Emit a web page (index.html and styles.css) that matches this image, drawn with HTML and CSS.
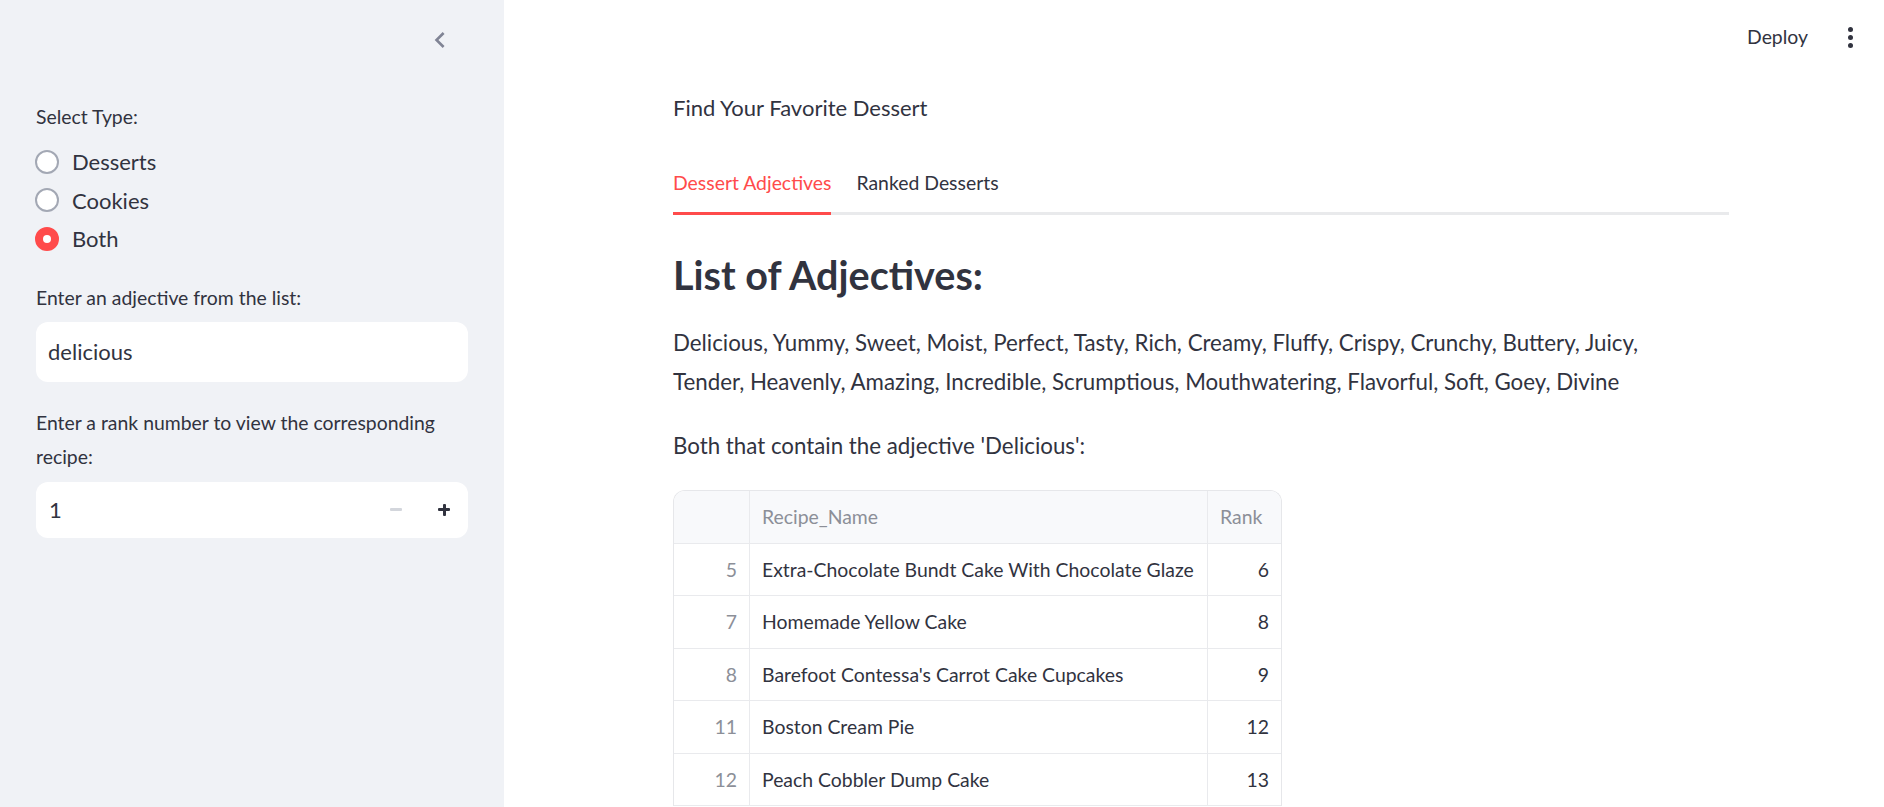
FILE: index.html
```html
<!DOCTYPE html>
<html lang="en">
<head>
<meta charset="utf-8">
<title>Find Your Favorite Dessert</title>
<link rel="stylesheet" href="styles.css">
</head>
<body>
<div class="app">
  <aside class="sidebar">
    <div class="sidebar-top">
      <button class="collapse" aria-label="Collapse sidebar">
        <svg width="32" height="32" viewBox="0 0 24 24"><path d="M15.41 7.41L14 6l-6 6 6 6 1.41-1.41L10.83 12z" fill="#808495"/></svg>
      </button>
    </div>
    <div class="widget">
      <div class="label">Select Type:</div>
      <div class="radios">
        <div class="radio"><span class="dot"></span><span>Desserts</span></div>
        <div class="radio"><span class="dot"></span><span>Cookies</span></div>
        <div class="radio"><span class="dot on"></span><span>Both</span></div>
      </div>
    </div>
    <div class="widget w2">
      <div class="label">Enter an adjective from the list:</div>
      <div class="textbox">delicious</div>
    </div>
    <div class="widget w3">
      <div class="label">Enter a rank number to view the corresponding recipe:</div>
      <div class="numbox">
        <div class="numval">1</div>
        <div class="step minus"><span class="bar"></span></div>
        <div class="step plus"><span class="bar"></span><span class="bar v"></span></div>
      </div>
    </div>
  </aside>
  <main class="main">
    <header class="topbar">
      <span class="deploy">Deploy</span>
      <span class="menu"><i></i><i></i><i></i></span>
    </header>
    <section class="content">
      <p class="intro">Find Your Favorite Dessert</p>
      <div class="tabs">
        <span class="tab active">Dessert Adjectives</span>
        <span class="tab">Ranked Desserts</span>
      </div>
      <h3 class="heading">List of Adjectives:</h3>
      <p class="para adj">Delicious, Yummy, Sweet, Moist, Perfect, Tasty, Rich, Creamy, Fluffy, Crispy, Crunchy, Buttery, Juicy, Tender, Heavenly, Amazing, Incredible, Scrumptious, Mouthwatering, Flavorful, Soft, Goey, Divine</p>
      <p class="para p2">Both that contain the adjective 'Delicious':</p>
      <div class="table">
        <div class="row head">
          <div class="c idx"></div><div class="c name">Recipe_Name</div><div class="c rank">Rank</div>
        </div>
        <div class="row"><div class="c idx">5</div><div class="c name">Extra-Chocolate Bundt Cake With Chocolate Glaze</div><div class="c rank">6</div></div>
        <div class="row"><div class="c idx">7</div><div class="c name">Homemade Yellow Cake</div><div class="c rank">8</div></div>
        <div class="row"><div class="c idx">8</div><div class="c name">Barefoot Contessa's Carrot Cake Cupcakes</div><div class="c rank">9</div></div>
        <div class="row"><div class="c idx">11</div><div class="c name">Boston Cream Pie</div><div class="c rank">12</div></div>
        <div class="row"><div class="c idx">12</div><div class="c name">Peach Cobbler Dump Cake</div><div class="c rank">13</div></div>
      </div>
    </section>
  </main>
</div>
</body>
</html>
```
FILE: styles.css
```css
* { box-sizing: border-box; }
html, body { margin: 0; padding: 0; }
body {
  font-family: Lato, "Noto Sans", sans-serif;
  color: #31333f;
  background: #fff;
  overflow: hidden;
}
.app { display: flex; height: 807px; overflow: hidden; }

.sidebar {
  width: 504px;
  flex: none;
  background: #f0f2f6;
  padding: 0 36px;
}
.sidebar-top { height: 100px; display: flex; justify-content: flex-end; }
.collapse {
  border: 0; background: none; padding: 0;
  width: 32px; height: 32px;
  margin: 24px 12px 0 0;
  display: block;
}
.collapse svg { display: block; }
.label { font-size: 19.4px; line-height: 33.6px; }
.radios { margin-top: 9px; }
.radio { display: flex; align-items: center; height: 38.4px; font-size: 22px; gap: 13px; }
.dot {
  width: 24px; height: 24px; border-radius: 50%;
  border: 2px solid #a3a8b4; background: #fff;
  flex: none; margin-left: -1px;
  display: flex; align-items: center; justify-content: center;
}
.dot.on { background: #ff4b4b; border-color: #ff4b4b; }
.dot.on::after { content: ""; width: 8px; height: 8px; border-radius: 50%; background: #fff; }
.w2 { margin-top: 23px; }
.textbox {
  margin-top: 8px; height: 60px; background: #fff; border-radius: 12px;
  font-size: 22px; line-height: 60px; padding: 0 12px;
}
.w3 { margin-top: 24px; }
.numbox {
  margin-top: 8px; height: 56px; background: #fff; border-radius: 12px;
  display: flex; align-items: stretch;
}
.numval { flex: 1; font-size: 22px; line-height: 56px; padding: 0 13px; }
.step { width: 48px; position: relative; display: flex; align-items: center; justify-content: center; }
.step .bar { position: absolute; width: 12px; height: 3px; background: #31333f; border-radius: 1px; }
.step .bar.v { width: 3px; height: 12px; }
.minus .bar { background: #d3d6dc; }

.main { flex: 1; display: flex; flex-direction: column; min-width: 0; }
.topbar {
  flex: none;
  height: 74px; display: flex; align-items: center; justify-content: flex-end;
  padding-right: 31px; gap: 40px;
}
.deploy { font-size: 19.4px; line-height: 33.6px; }
.menu { display: flex; flex-direction: column; gap: 3px; width: 5px; }
.menu i { width: 5px; height: 5px; border-radius: 50%; background: #31333f; display: block; }

.content { flex: none; width: 1056px; margin-left: 169px; }
.intro { margin: 15px 0 0; font-size: 22px; line-height: 38.4px; }
.tabs {
  margin-top: 39px; display: flex; gap: 25px;
  box-shadow: inset 0 -3px 0 #e9eaec;
}
.tab { font-size: 19.4px; line-height: 33.6px; padding-bottom: 15px; }
.tab.active { color: #ff4b4b; box-shadow: inset 0 -3px 0 #ff4b4b; }
.heading {
  margin: 35px 0 0; font-size: 39.5px; line-height: 50.4px; font-weight: 700;
}
.para { margin: 24px 0 0; font-size: 22.3px; line-height: 38.4px; }
.adj { max-width: 1005px; }
.p2 { margin-top: 26px; }

.table {
  margin-top: 24px; width: 609px;
  border: 1px solid #e6e7ea; border-bottom: 0;
  border-radius: 12px 12px 0 0; overflow: hidden;
}
.row { display: flex; height: 52.5px; border-bottom: 1.5px solid #e9eaed; }
.row.head { height: 53px; background: #f8f9fb; }
.c { font-size: 19.4px; line-height: 51px; padding: 0 12px; white-space: nowrap; }
.idx { width: 76px; text-align: right; color: #8c8f98; border-right: 1.5px solid #e9eaed; flex: none; }
.name { width: 458px; flex: none; border-right: 1.5px solid #e9eaed; }
.rank { flex: 1; text-align: right; }
.head .c { color: #8c8f98; }
.head .rank { text-align: left; }
```
